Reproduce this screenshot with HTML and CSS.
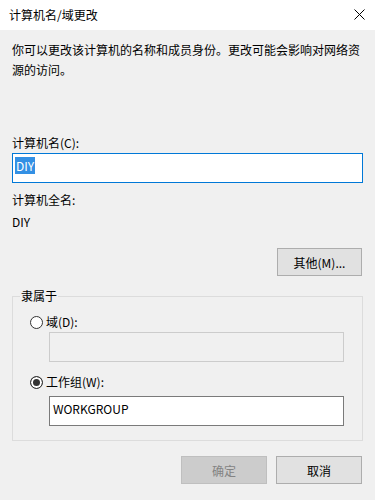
FILE: index.html
```html
<!DOCTYPE html>
<html lang="zh-CN">
<head>
  <meta charset="UTF-8">
  <meta name="viewport" content="width=device-width, initial-scale=1.0">
  <title>计算机名/域更改</title>
  <link rel="stylesheet" href="styles.css">
</head>
<body>
  <div class="titlebar">
    <span class="title">计算机名/域更改</span>
    <svg class="close" width="11" height="11" viewBox="0 0 11 11">
      <path d="M0.5 0.5 L10.5 10.5 M10.5 0.5 L0.5 10.5" stroke="#000" stroke-width="1" fill="none"/>
    </svg>
  </div>

  <div class="main">
    <p class="desc">你可以更改该计算机的名称和成员身份。更改可能会影响对网络资源的访问。</p>

    <div class="label first">计算机名(C):</div>
    <div class="edit active"><span class="sel">DIY</span></div>

    <div class="label full">计算机全名:</div>
    <div class="value">DIY</div>

    <div class="morerow">
      <button class="btn more">其他(M)...</button>
    </div>

    <fieldset class="group">
      <legend>隶属于</legend>
      <label class="radio"><span class="dot"></span>域(D):</label>
      <div class="edit disabled"></div>
      <label class="radio second"><span class="dot on"></span>工作组(W):</label>
      <div class="edit work">WORKGROUP</div>
    </fieldset>

    <div class="actions">
      <button class="btn off">确定</button>
      <button class="btn">取消</button>
    </div>
  </div>
</body>
</html>
```

FILE: styles.css
```css
* {
  padding: 0;
  margin: 0;
  box-sizing: border-box;
}

body {
  background: #f0f0f0;
  font-family: "Noto Sans CJK SC", sans-serif;
  font-size: 12px;
  color: #000;
  line-height: 20px;
}

.titlebar {
  height: 30px;
  background: #fff;
  display: flex;
  align-items: center;
  justify-content: space-between;
  padding: 0 10px 0 9px;
}

.close {
  display: block;
  margin-top: -2px;
}

.main {
  width: 363px;
  padding-left: 12px;
}

.desc {
  margin-top: 10px;
}

.label.first {
  margin-top: 53px;
}

.label.full {
  margin-top: 7px;
}

.value {
  margin-top: 2px;
}

.edit {
  height: 30px;
  background: #fff;
  border: 1px solid #7a7a7a;
  padding: 2px 3px 0;
}

.edit.active {
  border-color: #0078d7;
  padding-left: 2px;
}

.sel {
  background: #3390e4;
  color: #fff;
  padding: 0 1px;
}

.edit.disabled {
  background: #f0f0f0;
  border-color: #cccccc;
}

.morerow {
  margin-top: 16px;
  display: flex;
  justify-content: flex-end;
  padding-right: 1px;
}

.btn {
  font-family: inherit;
  font-size: 12px;
  color: #000;
  width: 86px;
  height: 28px;
  background: #e1e1e1;
  border: 1px solid #adadad;
}

.btn.more {
  width: 85px;
}

.btn.off {
  background: #cccccc;
  border-color: #bfbfbf;
  color: #838383;
}

.group {
  margin-top: 10px;
  border: 1px solid #dcdcdc;
  padding: 6px 18px 14px 7px;
}

.group legend {
  padding: 0 1px;
  line-height: 20px;
}

.radio {
  display: flex;
  align-items: center;
  height: 20px;
  margin-left: 10px;
}

.radio.second {
  margin-top: 10px;
}

.dot {
  width: 13px;
  height: 13px;
  border-radius: 50%;
  border: 1px solid #333;
  background: #fff;
  margin-right: 3px;
}

.dot.on {
  background: #333;
  box-shadow: inset 0 0 0 2px #fff;
}

.group .edit {
  margin-left: 29px;
}

.edit.work {
  margin-top: 4px;
}

.actions {
  margin-top: 15px;
  display: flex;
  justify-content: flex-end;
  gap: 9px;
  padding-right: 1px;
}
```
